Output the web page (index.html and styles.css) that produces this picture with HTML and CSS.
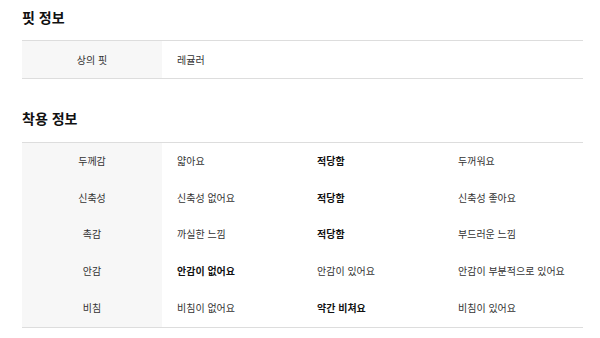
FILE: index.html
```html
<!DOCTYPE html>
<html lang="ko">
<head>
<meta charset="utf-8">
<link rel="stylesheet" href="styles.css">
</head>
<body>
<div class="page">
  <h2 class="title first">핏 정보</h2>
  <div class="table fit">
    <div class="label">상의 핏</div>
    <div class="val">레귤러</div>
  </div>

  <h2 class="title">착용 정보</h2>
  <div class="table wear">
    <div class="label">두께감</div>
    <div class="val">얇아요</div>
    <div class="val on">적당함</div>
    <div class="val">두꺼워요</div>

    <div class="label">신축성</div>
    <div class="val">신축성 없어요</div>
    <div class="val on">적당함</div>
    <div class="val">신축성 좋아요</div>

    <div class="label">촉감</div>
    <div class="val">까실한 느낌</div>
    <div class="val on">적당함</div>
    <div class="val">부드러운 느낌</div>

    <div class="label">안감</div>
    <div class="val on">안감이 없어요</div>
    <div class="val">안감이 있어요</div>
    <div class="val">안감이 부분적으로 있어요</div>

    <div class="label">비침</div>
    <div class="val">비침이 없어요</div>
    <div class="val on">약간 비쳐요</div>
    <div class="val">비침이 있어요</div>
  </div>
</div>
</body>
</html>
```

FILE: styles.css
```css
html, body {
  margin: 0;
  padding: 0;
  background: #fff;
}
body {
  font-family: "Noto Sans CJK KR", "Noto Sans", sans-serif;
  color: #222;
}
.page {
  padding: 0 17px 0 22px;
}
.title {
  margin: 29px 0 14px;
  font-size: 14px;
  line-height: 20px;
  font-weight: 700;
  color: #111;
}
.title.first {
  margin-top: 7px;
  margin-bottom: 13px;
}
.table {
  display: grid;
  border-top: 1px solid #ddd;
  border-bottom: 1px solid #ddd;
}
.fit {
  grid-template-columns: 140px 1fr;
}
.wear {
  grid-template-columns: 140px 140px 141px 1fr;
}
.label, .val {
  height: 37px;
  display: flex;
  align-items: center;
  font-size: 10px;
  box-sizing: border-box;
}
.wear .label, .wear .val {
  height: 36.8px;
  padding-bottom: 2px;
}
.label {
  justify-content: center;
  background: #f7f7f7;
  color: #333;
}
.val {
  padding-left: 15px;
  color: #333;
}
.val.on {
  font-weight: 700;
  color: #111;
}
```
